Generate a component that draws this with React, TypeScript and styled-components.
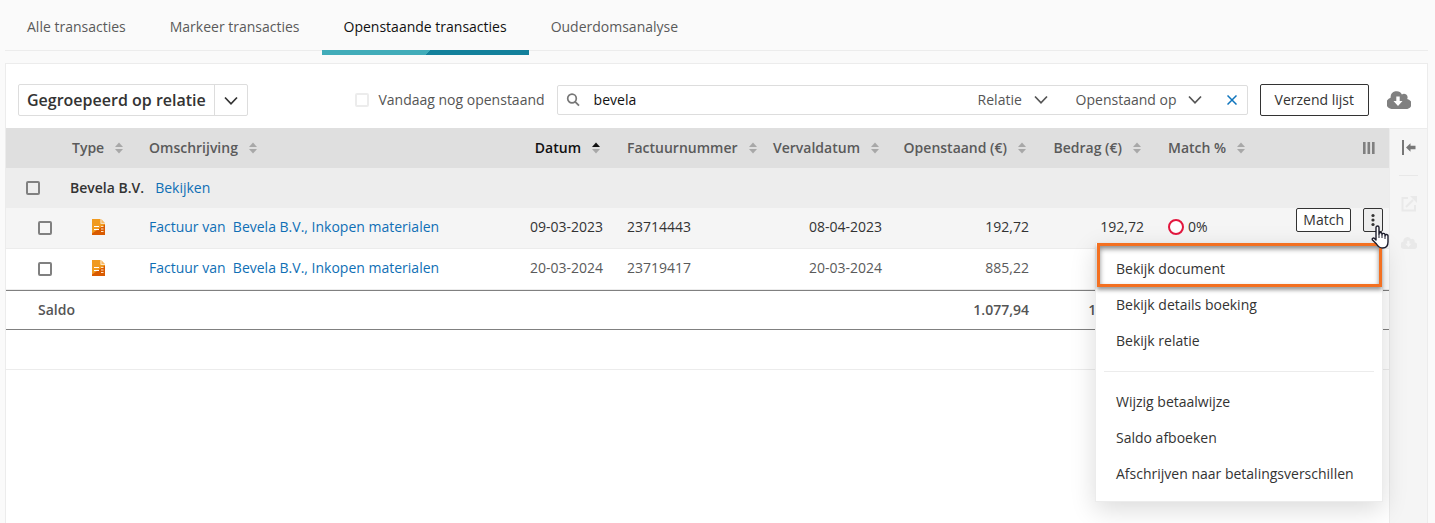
import React from "react";
import styled, { createGlobalStyle, css } from "styled-components";

const Global = createGlobalStyle`
  *, *::before, *::after { box-sizing: border-box; }
  body {
    margin: 0;
    background: #fafafa;
    color: #555;
    font: 400 14px/20px "Open Sans", "Noto Sans", sans-serif;
  }
  button, input, select { font: inherit; color: inherit; }
  a { text-decoration: none; }
  svg { flex: none; }
`;

const Page = styled.div`
  min-height: 100vh;
  display: flex;
  flex-direction: column;
  padding: 0 7px 0 5px;
`;

const Tabs = styled.nav`
  display: flex;
  height: 51px;
  margin-bottom: 12px;
  border-bottom: 1px solid #ececec;
`;

const Tab = styled.a<{ $active?: boolean }>`
  height: 55px;
  padding: 17px 22px 0;
  color: ${(p) => (p.$active ? "#111" : "#5a5a5a")};
  white-space: nowrap;
  ${(p) =>
    p.$active &&
    css`
      background: linear-gradient(135deg, #41acb9 51%, #13809b 51%) bottom / 100% 5px no-repeat;
    `}
`;

const Panel = styled.main`
  flex: 1;
  display: flex;
  flex-direction: column;
  background: #fff;
  border: 1px solid #ececec;
  border-bottom: 0;
`;

const Toolbar = styled.div`
  display: flex;
  align-items: center;
  height: 64px;
  padding: 8px 16px 0 12px;
`;

const GroupSelect = styled.div`
  position: relative;
  display: flex;
  align-items: center;
  height: 32px;
  border: 1px solid #ddd;
  border-radius: 2px;
  svg { margin: 2px 9px 0; pointer-events: none; }
`;

const PlainSelect = styled.select`
  appearance: none;
  border: 0;
  background: transparent;
  padding: 0;
  outline: none;
  cursor: pointer;
`;

const GroupField = styled(PlainSelect)`
  height: 30px;
  padding: 0 8px;
  border-right: 1px solid #ddd;
  color: #333;
  font-size: 16px;
  font-weight: 600;
`;

const Box = styled.input<{ $faint?: boolean }>`
  appearance: none;
  flex: none;
  display: block;
  width: 14px;
  height: 14px;
  margin: 0;
  border: 2px solid ${(p) => (p.$faint ? "#ececec" : "#808080")};
  border-radius: 2px;
  background: ${(p) => (p.$faint ? "#fff" : "transparent")};
`;

const OpenToday = styled.label`
  display: flex;
  align-items: center;
  gap: 9px;
  margin-left: auto;
  white-space: nowrap;
`;

const SearchBar = styled.div`
  flex: 0 1 691px;
  display: flex;
  align-items: center;
  height: 30px;
  margin: 0 12px;
  padding: 0 8px;
  border: 1px solid #ddd;
  border-radius: 2px;
`;

const SearchInput = styled.input`
  flex: 1;
  min-width: 0;
  padding: 0 0 0 14px;
  border: 0;
  outline: none;
  background: transparent;
  color: #111;
`;

const Filter = styled.span`
  display: flex;
  align-items: center;
  gap: 11px;
  margin-right: 28px;
`;

const IconButton = styled.button`
  display: flex;
  align-items: center;
  justify-content: center;
  padding: 0;
  border: 0;
  background: transparent;
  cursor: pointer;
`;

const ClearButton = styled(IconButton)`
  width: 14px;
  margin-left: -5px;
`;

const OutlineButton = styled.button<{ $small?: boolean }>`
  height: ${(p) => (p.$small ? "24px" : "32px")};
  padding: 0 ${(p) => (p.$small ? "6px" : "14px")};
  border: 1px solid #333;
  border-radius: 2px;
  background: #fff;
  color: #333;
  line-height: 20px;
  white-space: nowrap;
  cursor: pointer;
`;

const CloudButton = styled(IconButton)`
  margin-left: 18px;
`;

const Content = styled.div`
  flex: 1;
  display: flex;
`;

const TableArea = styled.div`
  flex: 1;
  min-width: 0;
`;

const Table = styled.table`
  width: 100%;
  table-layout: fixed;
  border-collapse: separate;
  border-spacing: 0;
`;

const HeaderRow = styled.tr`
  height: 40px;
  background: #dfdfdf;
`;

const Th = styled.th<{ $end?: boolean; $active?: boolean }>`
  padding: 0 12px;
  text-align: left;
  font-weight: 600;
  color: ${(p) => (p.$active ? "#111" : "#5a5a5a")};
  > span {
    display: flex;
    align-items: center;
    justify-content: ${(p) => (p.$end ? "flex-end" : "flex-start")};
    gap: 8px;
    white-space: nowrap;
  }
`;

const Td = styled.td<{ $end?: boolean; $indent?: number }>`
  padding: 0 12px;
  padding-left: ${(p) => p.$indent ?? 12}px;
  text-align: ${(p) => (p.$end ? "right" : "left")};
  white-space: nowrap;
`;

const TextTd = styled(Td)`
  padding-bottom: 3px;
`;

const ActionTd = styled(Td)`
  padding: 0;
`;

const GroupRow = styled.tr`
  height: 40px;
  background: #ededed;
  color: #333;
`;

const DataRow = styled.tr<{ $hover?: boolean }>`
  height: 41px;
  background: ${(p) => (p.$hover ? "#f5f5f5" : "#fff")};
  color: ${(p) => (p.$hover ? "#333" : "#5a5a5a")};
  td { border-bottom: 1px solid #ececec; }
`;

const TotalRow = styled.tr`
  height: 40px;
  font-weight: 600;
  td {
    border-top: 1px solid #808080;
    border-bottom: 1px solid #808080;
  }
`;

const EmptyRow = styled.tr`
  height: 40px;
  td { border-bottom: 1px solid #ececec; }
`;

const Party = styled.strong`
  margin-right: 11px;
  font-weight: 600;
`;

const Link = styled.a`
  color: #0f6fb5;
  white-space: pre;
`;

const MatchRate = styled.span`
  display: flex;
  align-items: center;
  gap: 4px;
`;

const Ring = styled.i`
  width: 16px;
  height: 16px;
  border: 2px solid #e3173e;
  border-radius: 50%;
  background: #fff;
`;

const Actions = styled.div`
  position: relative;
  display: flex;
  align-items: flex-start;
  justify-content: flex-end;
  gap: 12px;
  height: 40px;
  padding-right: 6px;
`;

const MoreButton = styled(IconButton)`
  width: 20px;
  height: 24px;
  border: 1px solid #333;
  border-radius: 2px;
  background: #ededed;
`;

const Menu = styled.div`
  position: absolute;
  z-index: 2;
  top: 34px;
  right: 6px;
  width: 288px;
  padding: 8px 8px 9px;
  border: 1px solid #ececec;
  background: #fff;
  box-shadow: 0 8px 24px rgba(0, 0, 0, 0.14);
  color: #333;
`;

const MenuItem = styled.button`
  display: block;
  width: 100%;
  height: 36px;
  padding: 0 12px;
  border: 0;
  background: transparent;
  text-align: left;
  white-space: nowrap;
  cursor: pointer;
`;

const MenuRule = styled.hr`
  margin: 12px 0;
  border: 0;
  border-top: 1px solid #ececec;
`;

const Highlight = styled.div`
  position: absolute;
  inset: 0 0 auto 1px;
  height: 44px;
  border: 3px solid #f37021;
  box-shadow: 0 3px 4px rgba(0, 0, 0, 0.4), inset 0 3px 5px rgba(0, 0, 0, 0.45);
  pointer-events: none;
`;

const Pointer = styled.svg`
  position: absolute;
  z-index: 3;
  top: 17px;
  right: 0;
`;

const Rail = styled.aside`
  flex: none;
  display: flex;
  flex-direction: column;
  align-items: center;
  width: 38px;
  padding-top: 11px;
  border: 1px solid #ececec;
  border-width: 1px 0 0 1px;
  background: #f5f5f5;
`;

const RailRule = styled.hr`
  width: 19px;
  margin: 20px 0;
  border: 0;
  border-top: 1px solid #e8e8e8;
`;

const RailCloud = styled(IconButton)`
  margin-top: 25px;
`;

function Chevron({ color = "#555" }: { color?: string }) {
  return (
    <svg width="14" height="10" viewBox="0 0 14 10" fill="none" stroke={color} strokeWidth="1.7">
      <path d="M1 1.500 7 7.800l6-6.300" />
    </svg>
  );
}

function Sort({ up }: { up?: boolean }) {
  return (
    <svg width="14" height="12" viewBox="0 0 14 12">
      <path d="M3 5 7 .5 11 5z" fill={up ? "#111" : "#a8a8a8"} />
      <path d="M3 7 7 11.500 11 7z" fill="#a8a8a8" />
    </svg>
  );
}

function Cloud({ width, color, hole }: { width: number; color: string; hole: string }) {
  return (
    <svg width={width} height={(width * 3) / 4} viewBox="0 0 24 18">
      <path
        fill={color}
        d="M20.200 7.900A3.600 3.600 0 0 0 14.900 3.400 6 6 0 0 0 3.600 6v.8A5.700 5.700 0 0 0 5.500 18h13.200a5.100 5.100 0 0 0 1.500-10.100z"
      />
      <path fill={hole} d="M9.300 5.500h3.400v4.500h2.800L11 15 6.500 10h2.800z" />
    </svg>
  );
}

function Invoice() {
  return (
    <svg width="14" height="16" viewBox="0 0 14 16" style={{ display: "block" }}>
      <path fill="#f09a20" d="M0 0h8.500v4.800H13V16H0z" />
      <path fill="#d95a00" d="M13 5.500V16H0v-1.500z" />
      <path fill="#f7b965" d="M9.300 0 13 4H9.300z" />
      <path stroke="#fff" d="M2 7.500h5M2 10.500h5" />
      <path stroke="#ffe3c2" d="M9 7.500h2.500M9 10h2.500M9 12.500h2.500" />
    </svg>
  );
}

const headers = [
  { label: "Type" },
  { label: "Omschrijving" },
  { label: "Datum", end: true, active: true },
  { label: "Factuurnummer" },
  { label: "Vervaldatum", end: true },
  { label: "Openstaand (€)", end: true },
  { label: "Bedrag (€)", end: true },
  { label: "Match %" },
];

const rows = [
  { date: "09-03-2023", no: "23714443", due: "08-04-2023", amount: "192,72", hover: true },
  { date: "20-03-2024", no: "23719417", due: "20-03-2024", amount: "885,22", hover: false },
];

function RowMenu() {
  return (
    <Menu role="menu">
      <MenuItem role="menuitem">Bekijk document</MenuItem>
      <MenuItem role="menuitem">Bekijk details boeking</MenuItem>
      <MenuItem role="menuitem">Bekijk relatie</MenuItem>
      <MenuRule />
      <MenuItem role="menuitem">Wijzig betaalwijze</MenuItem>
      <MenuItem role="menuitem">Saldo afboeken</MenuItem>
      <MenuItem role="menuitem">Afschrijven naar betalingsverschillen</MenuItem>
      <Highlight />
    </Menu>
  );
}

export default function App() {
  return (
    <>
      <Global />
      <Page>
        <Tabs>
          <Tab href="#alle">Alle transacties</Tab>
          <Tab href="#markeer">Markeer transacties</Tab>
          <Tab href="#openstaand" $active aria-current="page">Openstaande transacties</Tab>
          <Tab href="#analyse">Ouderdomsanalyse</Tab>
        </Tabs>
        <Panel>
          <Toolbar>
            <GroupSelect>
              <GroupField aria-label="Groepering">
                <option>Gegroepeerd op relatie</option>
              </GroupField>
              <Chevron color="#333" />
            </GroupSelect>
            <OpenToday>
              <Box type="checkbox" $faint />
              Vandaag nog openstaand
            </OpenToday>
            <SearchBar>
              <svg width="14" height="14" viewBox="0 0 14 14" fill="none" stroke="#777" strokeWidth="1.700">
                <circle cx="6" cy="5.500" r="4.300" />
                <path d="m9 8.600 4 4" />
              </svg>
              <SearchInput aria-label="Zoeken" defaultValue="bevela" />
              <Filter>
                <PlainSelect aria-label="Zoekveld"><option>Relatie</option></PlainSelect>
                <Chevron />
              </Filter>
              <Filter>
                <PlainSelect aria-label="Peildatum"><option>Openstaand op</option></PlainSelect>
                <Chevron />
              </Filter>
              <ClearButton aria-label="Wissen">
                <svg width="10" height="10" viewBox="0 0 10 10" stroke="#0f75bd" strokeWidth="1.500">
                  <path d="m.5.5 9 9M9.500.5l-9 9" />
                </svg>
              </ClearButton>
            </SearchBar>
            <OutlineButton>Verzend lijst</OutlineButton>
            <CloudButton aria-label="Downloaden">
              <Cloud width={24} color="#808080" hole="#fff" />
            </CloudButton>
          </Toolbar>
          <Content>
            <TableArea>
              <Table>
                <colgroup>
                  {[54, 77, 0, 115, 149, 130, 147, 115, 104, 129].map((w, i) => (
                    <col key={i} style={w ? { width: w } : undefined} />
                  ))}
                </colgroup>
                <thead>
                  <HeaderRow>
                    <Th />
                    {headers.map((h) => (
                      <Th key={h.label} $end={h.end} $active={h.active}>
                        <span>{h.label}<Sort up={h.active} /></span>
                      </Th>
                    ))}
                    <Th $end>
                      <span>
                        <IconButton aria-label="Kolommen">
                          <svg width="14" height="12" viewBox="0 0 14 12" fill="#808080">
                            <path d="M0 0h2.600v12H0zM4.500 0h2.600v12H4.500zM9 0h2.600v12H9z" />
                          </svg>
                        </IconButton>
                      </span>
                    </Th>
                  </HeaderRow>
                </thead>
                <tbody>
                  <GroupRow>
                    <Td $indent={20}><Box type="checkbox" aria-label="Bevela B.V." /></Td>
                    <Td colSpan={9} $indent={10}>
                      <Party>Bevela B.V.</Party>
                      <Link href="#bevela">Bekijken</Link>
                    </Td>
                  </GroupRow>
                  {rows.map((r) => (
                    <DataRow key={r.no} $hover={r.hover}>
                      <Td $indent={32}><Box type="checkbox" aria-label={r.no} /></Td>
                      <TextTd $indent={32}><Invoice /></TextTd>
                      <TextTd><Link href={"#" + r.no}>Factuur van  Bevela B.V., Inkopen materialen</Link></TextTd>
                      <TextTd $end>{r.date}</TextTd>
                      <TextTd>{r.no}</TextTd>
                      <TextTd $end>{r.due}</TextTd>
                      <TextTd $end>{r.amount}</TextTd>
                      <TextTd $end>{r.amount}</TextTd>
                      <TextTd><MatchRate><Ring />0%</MatchRate></TextTd>
                      <ActionTd $indent={0}>
                        {r.hover && (
                          <Actions>
                            <OutlineButton $small>Match</OutlineButton>
                            <MoreButton aria-label="Meer acties">
                              <svg width="4" height="14" viewBox="0 0 4 14" fill="#333">
                                <circle cx="2" cy="2.500" r="1.600" />
                                <circle cx="2" cy="7" r="1.600" />
                                <circle cx="2" cy="11.500" r="1.600" />
                              </svg>
                            </MoreButton>
                            <RowMenu />
                            <Pointer width="18" height="24" viewBox="0 0 18 24">
                              <path
                                fill="#fff"
                                stroke="#1b1b2b"
                                strokeWidth="1.400"
                                strokeLinejoin="round"
                                d="M5 15V2.500a1.500 1.500 0 0 1 3 0V9a1.500 1.500 0 0 1 3 0v.8a1.500 1.500 0 0 1 3 .2v.8a1.500 1.500 0 0 1 3 .4V17c0 3.500-2 6-5.500 6-3 0-4.500-1.500-6-4L1.500 15c-1-1.500 1-2.800 2-1.500z"
                              />
                              <path stroke="#1b1b2b" d="M8 9v4M11 10v3M14 11v3" />
                            </Pointer>
                          </Actions>
                        )}
                      </ActionTd>
                    </DataRow>
                  ))}
                  <TotalRow>
                    <Td colSpan={5} $indent={32}>Saldo</Td>
                    <Td />
                    <Td $end>1.077,94</Td>
                    <Td $end>1.077,94</Td>
                    <Td colSpan={2} />
                  </TotalRow>
                  <EmptyRow><Td colSpan={10} /></EmptyRow>
                </tbody>
              </Table>
            </TableArea>
            <Rail>
              <IconButton aria-label="Paneel openen">
                <svg width="14" height="15" viewBox="0 0 14 15" fill="#777">
                  <path d="M0 0h2v15H0zM4 7.500 8.500 3.200v2.600h5v3.400h-5v2.600z" />
                </svg>
              </IconButton>
              <RailRule />
              <IconButton aria-label="Openen">
                <svg width="16" height="16" viewBox="0 0 16 16" fill="none" stroke="#e9e9e9" strokeWidth="2">
                  <path d="M7 2H1.500v12.500H14V9M5 11l7-7" />
                  <path fill="#e9e9e9" stroke="none" d="M9 0h7v7z" />
                </svg>
              </IconButton>
              <RailCloud aria-label="Download document">
                <Cloud width={16} color="#e9e9e9" hole="#f5f5f5" />
              </RailCloud>
            </Rail>
          </Content>
        </Panel>
      </Page>
    </>
  );
}
